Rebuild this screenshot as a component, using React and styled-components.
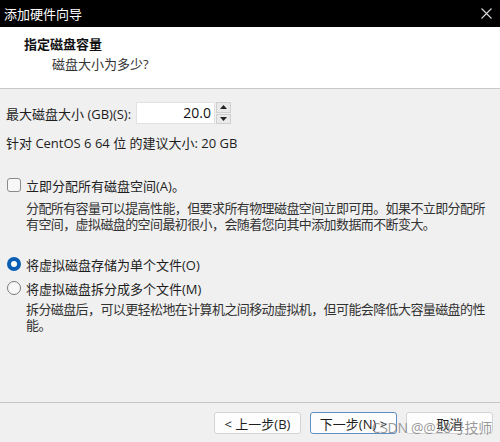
import React from "react";
import styled, { createGlobalStyle } from "styled-components";

const GlobalStyle = createGlobalStyle`
  html, body {
    margin: 0;
    padding: 0;
    background: #f0f0f0;
  }
  * {
    box-sizing: border-box;
  }
`;

const font = `"Open Sans", "Noto Sans", "Noto Sans CJK SC", sans-serif`;

const Window = styled.div`
  width: 500px;
  height: 442px;
  display: flex;
  flex-direction: column;
  background: #f0f0f0;
  font-family: ${font};
  font-size: 13px;
  color: #1e1e1e;
  position: relative;
  overflow: hidden;
`;

const TitleBar = styled.div`
  height: 27px;
  background: #000;
  color: #fff;
  display: flex;
  align-items: center;
  justify-content: space-between;
  padding: 0 8px 0 4px;
  font-size: 13px;
`;

const CloseIcon = () => (
  <svg width="11" height="11" viewBox="0 0 11 11">
    <path d="M0.5 0.5 L10.5 10.5 M10.5 0.5 L0.5 10.5" stroke="#d8d8d8" strokeWidth="1.1" />
  </svg>
);

const Header = styled.div`
  height: 62px;
  background: #fff;
  border-bottom: 1px solid #c9c9c9;
  padding: 8px 0 0 24px;
`;

const HeaderTitle = styled.div`
  font-weight: 700;
  line-height: 18px;
  color: #111;
`;

const HeaderSub = styled.div`
  margin-top: 2px;
  padding-left: 28px;
  line-height: 18px;
  color: #333;
`;

const Body = styled.div`
  flex: 1;
  padding: 13px 6px 0 6px;
  display: flex;
  flex-direction: column;
`;

const SizeRow = styled.div`
  height: 22px;
  display: flex;
  align-items: center;
`;

const Label = styled.span`
  width: 130px;
`;

const Spin = styled.div`
  display: flex;
  height: 22px;
`;

const NumberBox = styled.div`
  width: 79px;
  height: 22px;
  background: #fff;
  border: 1px solid #e2e2e2;
  text-align: right;
  padding-right: 3px;
  line-height: 20px;
  font-size: 14px;
  color: #111;
`;

const SpinButtons = styled.div`
  width: 15px;
  display: flex;
  flex-direction: column;
  gap: 1px;
  margin-left: 1px;
`;

const SpinButton = styled.div`
  flex: 1;
  background: #e9e9e9;
  border: 1px solid #cfcfcf;
  display: flex;
  align-items: center;
  justify-content: center;
`;

const Arrow = ({ down }) => (
  <svg width="7" height="4" viewBox="0 0 7 4">
    <path d={down ? "M0 0 L7 0 L3.5 4 Z" : "M0 4 L7 4 L3.5 0 Z"} fill="#222" />
  </svg>
);

const Line = styled.div`
  line-height: 16px;
  margin-top: ${(p) => p.$mt || 0}px;
`;

const OptionRow = styled.label`
  display: flex;
  align-items: center;
  height: 16px;
  gap: 5px;
  margin-top: ${(p) => p.$mt || 0}px;
`;

const CheckBox = styled.span`
  width: 14px;
  height: 14px;
  border: 1px solid #8a8a8a;
  border-radius: 3px;
  background: #f7f7f7;
  margin-left: 1px;
`;

const Radio = styled.span`
  width: 14px;
  height: 14px;
  border-radius: 50%;
  margin-left: 1px;
  border: ${(p) => (p.$checked ? "4px solid #0a5fb4" : "1px solid #7a7a7a")};
  background: ${(p) => (p.$checked ? "#fff" : "#f7f7f7")};
`;

const Desc = styled.div`
  margin-top: ${(p) => p.$mt || 0}px;
  padding-left: 20px;
  line-height: 16px;
  font-size: 13px;
  letter-spacing: -0.6px;
  color: #333;
`;

const DescLine = styled.div`
  white-space: nowrap;
  height: 16px;
`;

const Footer = styled.div`
  height: 40px;
  border-top: 1px solid #c6c6c6;
  display: flex;
  justify-content: flex-end;
  padding: 9px 7px 0 0;
  gap: 9px;
`;

const Button = styled.div`
  width: ${(p) => p.$w || 87}px;
  height: 22px;
  background: #fdfdfd;
  border: 1px solid ${(p) => (p.$focus ? "#5d8fc5" : "#d4d4d4")};
  border-radius: 3px;
  display: flex;
  align-items: center;
  justify-content: center;
  color: #1e1e1e;
`;

const Watermark = styled.div`
  position: absolute;
  right: 8px;
  bottom: 5px;
  font-size: 14px;
  color: rgba(120, 120, 120, 0.75);
  letter-spacing: -0.3px;
  pointer-events: none;
`;

export default function App() {
  return (
    <>
      <GlobalStyle />
      <Window>
        <TitleBar>
          <span>添加硬件向导</span>
          <CloseIcon />
        </TitleBar>
        <Header>
          <HeaderTitle>指定磁盘容量</HeaderTitle>
          <HeaderSub>磁盘大小为多少?</HeaderSub>
        </Header>
        <Body>
          <SizeRow>
            <Label>最大磁盘大小 (GB)(S):</Label>
            <Spin>
              <NumberBox>20.0</NumberBox>
              <SpinButtons>
                <SpinButton>
                  <Arrow />
                </SpinButton>
                <SpinButton>
                  <Arrow down />
                </SpinButton>
              </SpinButtons>
            </Spin>
          </SizeRow>
          <Line $mt={11}>针对 CentOS 6 64 位 的建议大小: 20 GB</Line>
          <OptionRow $mt={26}>
            <CheckBox />
            <span>立即分配所有磁盘空间(A)。</span>
          </OptionRow>
          <Desc $mt={7}>
            <DescLine>分配所有容量可以提高性能，但要求所有物理磁盘空间立即可用。如果不立即分配所</DescLine>
            <DescLine>有空间，虚拟磁盘的空间最初很小，会随着您向其中添加数据而不断变大。</DescLine>
          </Desc>
          <OptionRow $mt={24}>
            <Radio $checked />
            <span>将虚拟磁盘存储为单个文件(O)</span>
          </OptionRow>
          <OptionRow $mt={8}>
            <Radio />
            <span>将虚拟磁盘拆分成多个文件(M)</span>
          </OptionRow>
          <Desc $mt={5}>
            <DescLine>拆分磁盘后，可以更轻松地在计算机之间移动虚拟机，但可能会降低大容量磁盘的性</DescLine>
            <DescLine>能。</DescLine>
          </Desc>
        </Body>
        <Footer>
          <Button>&lt; 上一步(B)</Button>
          <Button $focus>下一步(N) &gt;</Button>
          <Button>取消</Button>
        </Footer>
        <Watermark>CSDN @@28号技师</Watermark>
      </Window>
    </>
  );
}
